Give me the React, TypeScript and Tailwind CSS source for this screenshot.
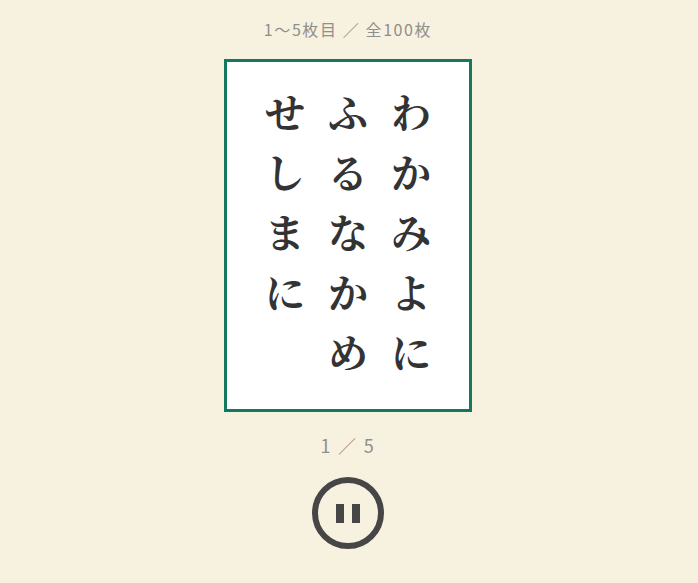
const columns = [
  ['わ', 'か', 'み', 'よ', 'に'],
  ['ふ', 'る', 'な', 'か', 'め'],
  ['せ', 'し', 'ま', 'に'],
]

export default function App() {
  return (
    <main className="min-h-[583px] bg-[#f7f1df] flex flex-col items-center pt-[17px] pr-[2px] font-['Noto_Sans_CJK_JP','Noto_Sans',sans-serif]">
      <p className="text-[16px] leading-[24px] tracking-[0.1em] text-[#8f8f8b]">1〜5枚目 ／ 全100枚</p>
      <div className="mt-[18px] w-[248px] h-[353px] bg-white border-[3px] border-[#14785f] flex flex-row-reverse justify-center gap-[17px] pt-[19px] font-['Noto_Serif_CJK_JP','Noto_Sans_CJK_JP',serif]">
        {columns.map((col, i) => (
          <div key={i} className="flex flex-col w-[46px] items-center">
            {col.map((ch, j) => (
              <span key={j} className="text-[40px] leading-[60px] font-bold text-[#333333]">{ch}</span>
            ))}
          </div>
        ))}
      </div>
      <p className="mt-[20px] text-[18px] leading-[27px] tracking-[0.1em] text-[#8f8f8b]">1 ／ 5</p>
      <button type="button" className="mt-[18px] w-[72px] h-[72px] rounded-full border-[6px] border-[#464646] flex items-center justify-center gap-[8px]">
        <span className="w-[8px] h-[19px] bg-[#464646]" />
        <span className="w-[8px] h-[19px] bg-[#464646]" />
      </button>
    </main>
  )
}
